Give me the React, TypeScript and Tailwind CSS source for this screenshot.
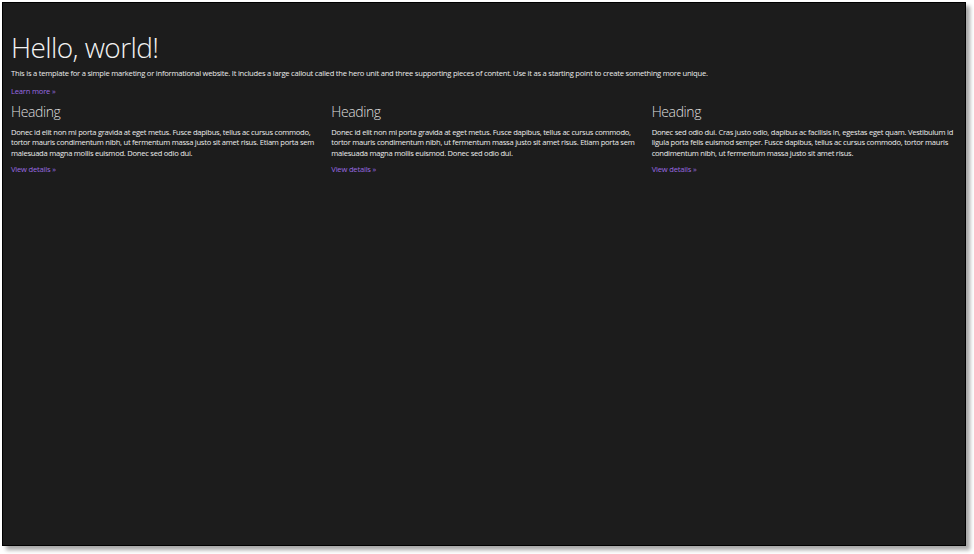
export default function App() {
  const cols = [
    "Donec id elit non mi porta gravida at eget metus. Fusce dapibus, tellus ac cursus commodo, tortor mauris condimentum nibh, ut fermentum massa justo sit amet risus. Etiam porta sem malesuada magna mollis euismod. Donec sed odio dui.",
    "Donec id elit non mi porta gravida at eget metus. Fusce dapibus, tellus ac cursus commodo, tortor mauris condimentum nibh, ut fermentum massa justo sit amet risus. Etiam porta sem malesuada magna mollis euismod. Donec sed odio dui.",
    "Donec sed odio dui. Cras justo odio, dapibus ac facilisis in, egestas eget quam. Vestibulum id ligula porta felis euismod semper. Fusce dapibus, tellus ac cursus commodo, tortor mauris condimentum nibh, ut fermentum massa justo sit amet risus.",
  ];
  return (
    <div className="w-[974px] h-[554px] bg-white overflow-hidden" style={{ fontFamily: '"Open Sans", "Noto Sans", sans-serif' }}>
      <div className="ml-[2px] mt-[2px] w-[964px] h-[544px] border border-black bg-[#1c1c1c] shadow-[4px_4px_4px_rgba(0,0,0,0.35)] pl-[8px] pr-[5px] pt-[24px]">
        <h1 className="text-[28px] font-light leading-[40px] text-[#f2f2f2] tracking-[-0.6px]">Hello, world!</h1>
        <p className="text-[7.6px] leading-[12px] text-[#ececec] tracking-[-0.23px]">
          This is a template for a simple marketing or informational website. It includes a large callout called the hero unit and three supporting pieces of content. Use it as a starting point to create something more unique.
        </p>
        <a className="block mt-[6px] text-[7.6px] leading-[12px] text-[#9a6ae0] tracking-[-0.2px]">Learn more »</a>
        <div className="grid grid-cols-3 gap-x-[12px] mt-[4px]">
          {cols.map((t, i) => (
            <div key={i}>
              <h2 className="text-[14px] font-light leading-[22px] text-[#dedede] tracking-[-0.4px]">Heading</h2>
              <p className="mt-[4px] text-[7.6px] leading-[10.3px] text-[#ececec] tracking-[-0.26px]">{t}</p>
              <a className="block mt-[6px] text-[7.6px] leading-[10.3px] text-[#9a6ae0] tracking-[-0.2px]">View details »</a>
            </div>
          ))}
        </div>
      </div>
    </div>
  );
}
